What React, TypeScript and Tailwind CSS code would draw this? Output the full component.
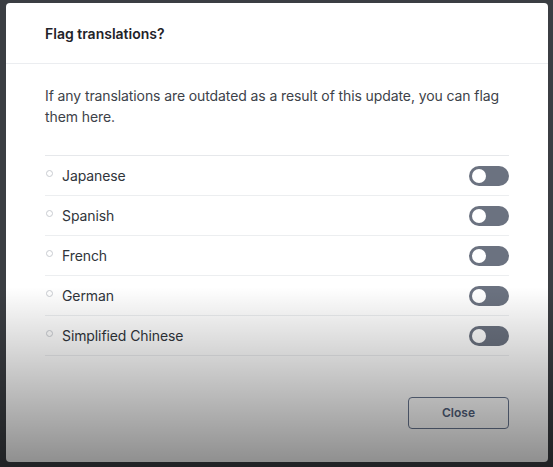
import { useState } from "react";

const languages = ["Japanese", "Spanish", "French", "German", "Simplified Chinese"];

function Toggle({ on, onChange }: { on: boolean; onChange: () => void }) {
  return (
    <button
      type="button"
      onClick={onChange}
      className={`flex h-[20px] w-[40px] items-center rounded-full px-[3px] ${
        on ? "justify-end bg-[#4b5563]" : "justify-start bg-[#6b7280]"
      }`}
    >
      <span className="h-[14px] w-[14px] rounded-full bg-white" />
    </button>
  );
}

export default function App() {
  const [flags, setFlags] = useState<Record<string, boolean>>({});

  return (
    <div className="relative h-[467px] w-[553px] overflow-hidden bg-[#3b3e43] pt-[3px] pl-[6px] font-['Inter','Liberation_Sans',sans-serif]">
      <div className="h-[459px] w-[542px] rounded-[4px] bg-white">
        {/* Header */}
        <div className="flex h-[61px] items-center border-b border-[#ebedf0] px-[39px]">
          <h2 className="text-[14px] font-semibold text-[#1f2329]">Flag translations?</h2>
        </div>

        <div className="px-[39px] pt-[21px]">
          <p className="text-[14px] leading-[21px] tracking-[-0.1px] text-[#3d4249]">
            If any translations are outdated as a result of this update, you can flag them here.
          </p>

          {/* Language list */}
          <ul className="mt-[28px] w-[464px] border-t border-[#e6e8eb]">
            {languages.map((lang) => (
              <li
                key={lang}
                className="flex h-[40px] items-center justify-between border-b border-[#eceef0]"
              >
                <div className="flex items-center">
                  <span className="mb-[4px] ml-[1px] h-[7px] w-[7px] rounded-full border border-[#c9ccd1]" />
                  <span className="ml-[9px] text-[14px] tracking-[-0.1px] text-[#30353b]">{lang}</span>
                </div>
                <Toggle
                  on={!!flags[lang]}
                  onChange={() => setFlags((f) => ({ ...f, [lang]: !f[lang] }))}
                />
              </li>
            ))}
          </ul>

          <div className="mt-[41px] flex w-[464px] justify-end">
            <button
              type="button"
              className="h-[32px] w-[101px] rounded-[4px] border border-[#687690] text-[12px] font-semibold text-[#52617c]"
            >
              Close
            </button>
          </div>
        </div>
      </div>

      {/* video fade over the lower part */}
      <div className="pointer-events-none absolute inset-x-0 bottom-0 h-[180px] bg-gradient-to-b from-transparent to-black/45" />
    </div>
  );
}
